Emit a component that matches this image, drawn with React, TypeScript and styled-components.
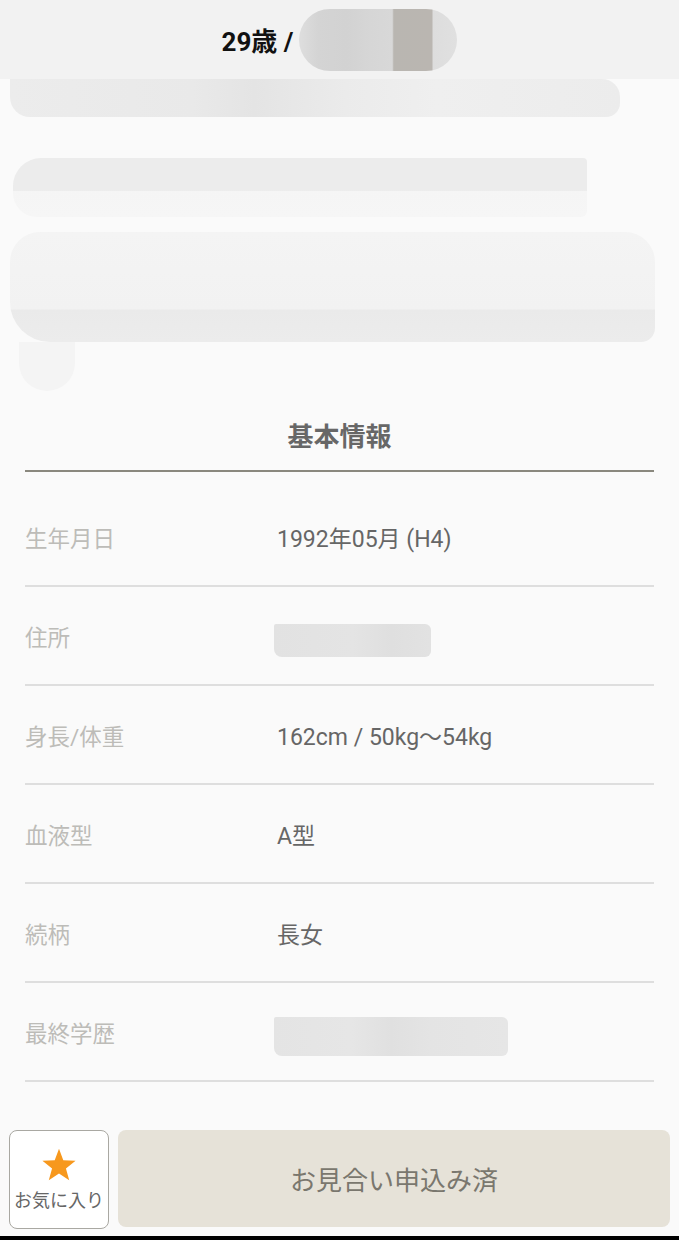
import React from "react";
import styled, { createGlobalStyle } from "styled-components";

const Global = createGlobalStyle`
  html, body { margin: 0; padding: 0; background: #fafafa; }
  body { font-family: Roboto, "Noto Sans CJK JP", sans-serif; }
  * { box-sizing: border-box; }
`;

const Page = styled.div`
  min-height: 1240px;
  display: flex;
  flex-direction: column;
  background: #fafafa;
`;

const Header = styled.header`
  height: 79px;
  background: #f2f2f2;
  display: flex;
  align-items: center;
  justify-content: center;
  gap: 6px;
  padding-left: 0;
`;

const HeaderText = styled.span`
  font-family: Roboto, "Noto Sans CJK JP", sans-serif;
  font-weight: 700;
  font-size: 26px;
  color: #111;
`;

const NamePill = styled.div`
  width: 158px;
  height: 62px;
  border-radius: 31px;
  background: linear-gradient(
    90deg,
    #dedede 0%,
    #d4d4d4 12%,
    #d2d2d2 30%,
    #d6d6d6 45%,
    #d8d8d8 59%,
    #b9b6b1 60%,
    #bab6b1 84%,
    #dddddd 85%,
    #e0e0e0 100%
  );
`;

const BlurArea = styled.div`
  display: flex;
  flex-direction: column;
`;

const Blur = styled.div<{ $ml: number; $mt: number; $w: number; $h: number; $bg: string; $r: string }>`
  margin-left: ${(p) => p.$ml}px;
  margin-top: ${(p) => p.$mt}px;
  width: ${(p) => p.$w}px;
  height: ${(p) => p.$h}px;
  background: ${(p) => p.$bg};
  border-radius: ${(p) => p.$r};
`;

const Section = styled.section`
  margin: 0 25px;
`;

const Title = styled.h2`
  margin: 29px 0 0;
  padding-bottom: 16px;
  text-align: center;
  font-family: Roboto, "Noto Sans CJK JP", sans-serif;
  font-size: 26px;
  line-height: 34px;
  font-weight: 700;
  color: #676767;
  border-bottom: 2px solid #8a887e;
`;

const List = styled.dl`
  margin: 0;
  padding-top: 16px;
`;

const Row = styled.div`
  height: 99px;
  display: flex;
  align-items: center;
  border-bottom: 2px solid #dedede;
`;

const Label = styled.dt`
  width: 252px;
  font-size: 22.5px;
  color: #bdbcb8;
  margin: 0;
`;

const Value = styled.dd`
  margin: 0;
  font-size: 23px;
  color: #666;
`;

const ValueBlur = styled.div<{ $w: number; $h: number; $bg: string }>`
  margin-left: -3px;
  margin-top: 10px;
  width: ${(p) => p.$w}px;
  height: ${(p) => p.$h}px;
  background: ${(p) => p.$bg};
  border-radius: 2px 6px 6px 8px;
`;

const Footer = styled.footer`
  margin-top: auto;
  display: flex;
  gap: 9px;
  padding: 0 9px 7px;
`;

const FavButton = styled.button`
  width: 100px;
  height: 99px;
  border: 1.5px solid #a9a8a2;
  border-radius: 8px;
  background: #fff;
  display: flex;
  flex-direction: column;
  align-items: center;
  justify-content: center;
  gap: 4px;
  padding: 0;
  font-family: Roboto, "Noto Sans CJK JP", sans-serif;
  font-size: 18px;
  color: #666;
`;

const MainButton = styled.button`
  flex: 1;
  height: 97px;
  border: none;
  border-radius: 8px;
  background: #e6e2d8;
  font-family: Roboto, "Noto Sans CJK JP", sans-serif;
  font-size: 26px;
  color: #7a776e;
  padding: 0;
`;

const NavBar = styled.div`
  height: 4px;
  background: #000;
`;

const Star = () => (
  <svg width="36" height="34" viewBox="0 0 24 23">
    <polygon
      points="12,0.5 14.9,8.3 23.2,8.6 16.7,13.8 18.9,21.9 12,17.3 5.1,21.9 7.3,13.8 0.8,8.6 9.1,8.3"
      fill="#f7981d"
    />
  </svg>
);

const rows: { label: string; value?: string; blur?: { w: number; h: number; bg: string } }[] = [
  { label: "生年月日", value: "1992年05月 (H4)" },
  {
    label: "住所",
    blur: { w: 157, h: 33, bg: "linear-gradient(90deg,#e2e2e2 0%,#e4e4e4 50%,#dfdfdf 75%,#e2e2e2 100%)" },
  },
  { label: "身長/体重", value: "162cm / 50kg〜54kg" },
  { label: "血液型", value: "A型" },
  { label: "続柄", value: "長女" },
  {
    label: "最終学歴",
    blur: { w: 234, h: 39, bg: "linear-gradient(90deg,#e4e4e4 0%,#e6e6e6 33%,#e0e0e0 50%,#e4e4e4 67%,#e6e6e6 100%)" },
  },
];

export default function App() {
  return (
    <>
      <Global />
      <Page>
        <Header>
          <HeaderText>29歳 /</HeaderText>
          <NamePill />
        </Header>
        <BlurArea>
          <Blur
            $ml={10}
            $mt={0}
            $w={610}
            $h={38}
            $bg="linear-gradient(90deg,#ececec 0%,#e9e9e9 30%,#e4e4e4 40%,#ebebeb 55%,#efefef 70%,#ececec 100%)"
            $r="0 18px 14px 20px"
          />
          <Blur
            $ml={13}
            $mt={41}
            $w={574}
            $h={59}
            $bg="linear-gradient(180deg,#ececec 0%,#ececec 55%,#f5f5f5 56%,#f6f6f6 100%)"
            $r="28px 4px 6px 24px"
          />
          <Blur
            $ml={10}
            $mt={15}
            $w={645}
            $h={110}
            $bg="linear-gradient(180deg,#f4f4f4 0%,#f2f2f2 70%,#eaeaea 71%,#ececec 100%)"
            $r="30px 30px 14px 40px"
          />
          <Blur $ml={19} $mt={0} $w={56} $h={49} $bg="#f4f4f4" $r="0 0 28px 28px" />
        </BlurArea>
        <Section>
          <Title>基本情報</Title>
          <List>
            {rows.map((r) => (
              <Row key={r.label}>
                <Label>{r.label}</Label>
                {r.value ? (
                  <Value>{r.value}</Value>
                ) : (
                  r.blur && <ValueBlur $w={r.blur.w} $h={r.blur.h} $bg={r.blur.bg} />
                )}
              </Row>
            ))}
          </List>
        </Section>
        <Footer>
          <FavButton>
            <Star />
            <span>お気に入り</span>
          </FavButton>
          <MainButton>お見合い申込み済</MainButton>
        </Footer>
        <NavBar />
      </Page>
    </>
  );
}
